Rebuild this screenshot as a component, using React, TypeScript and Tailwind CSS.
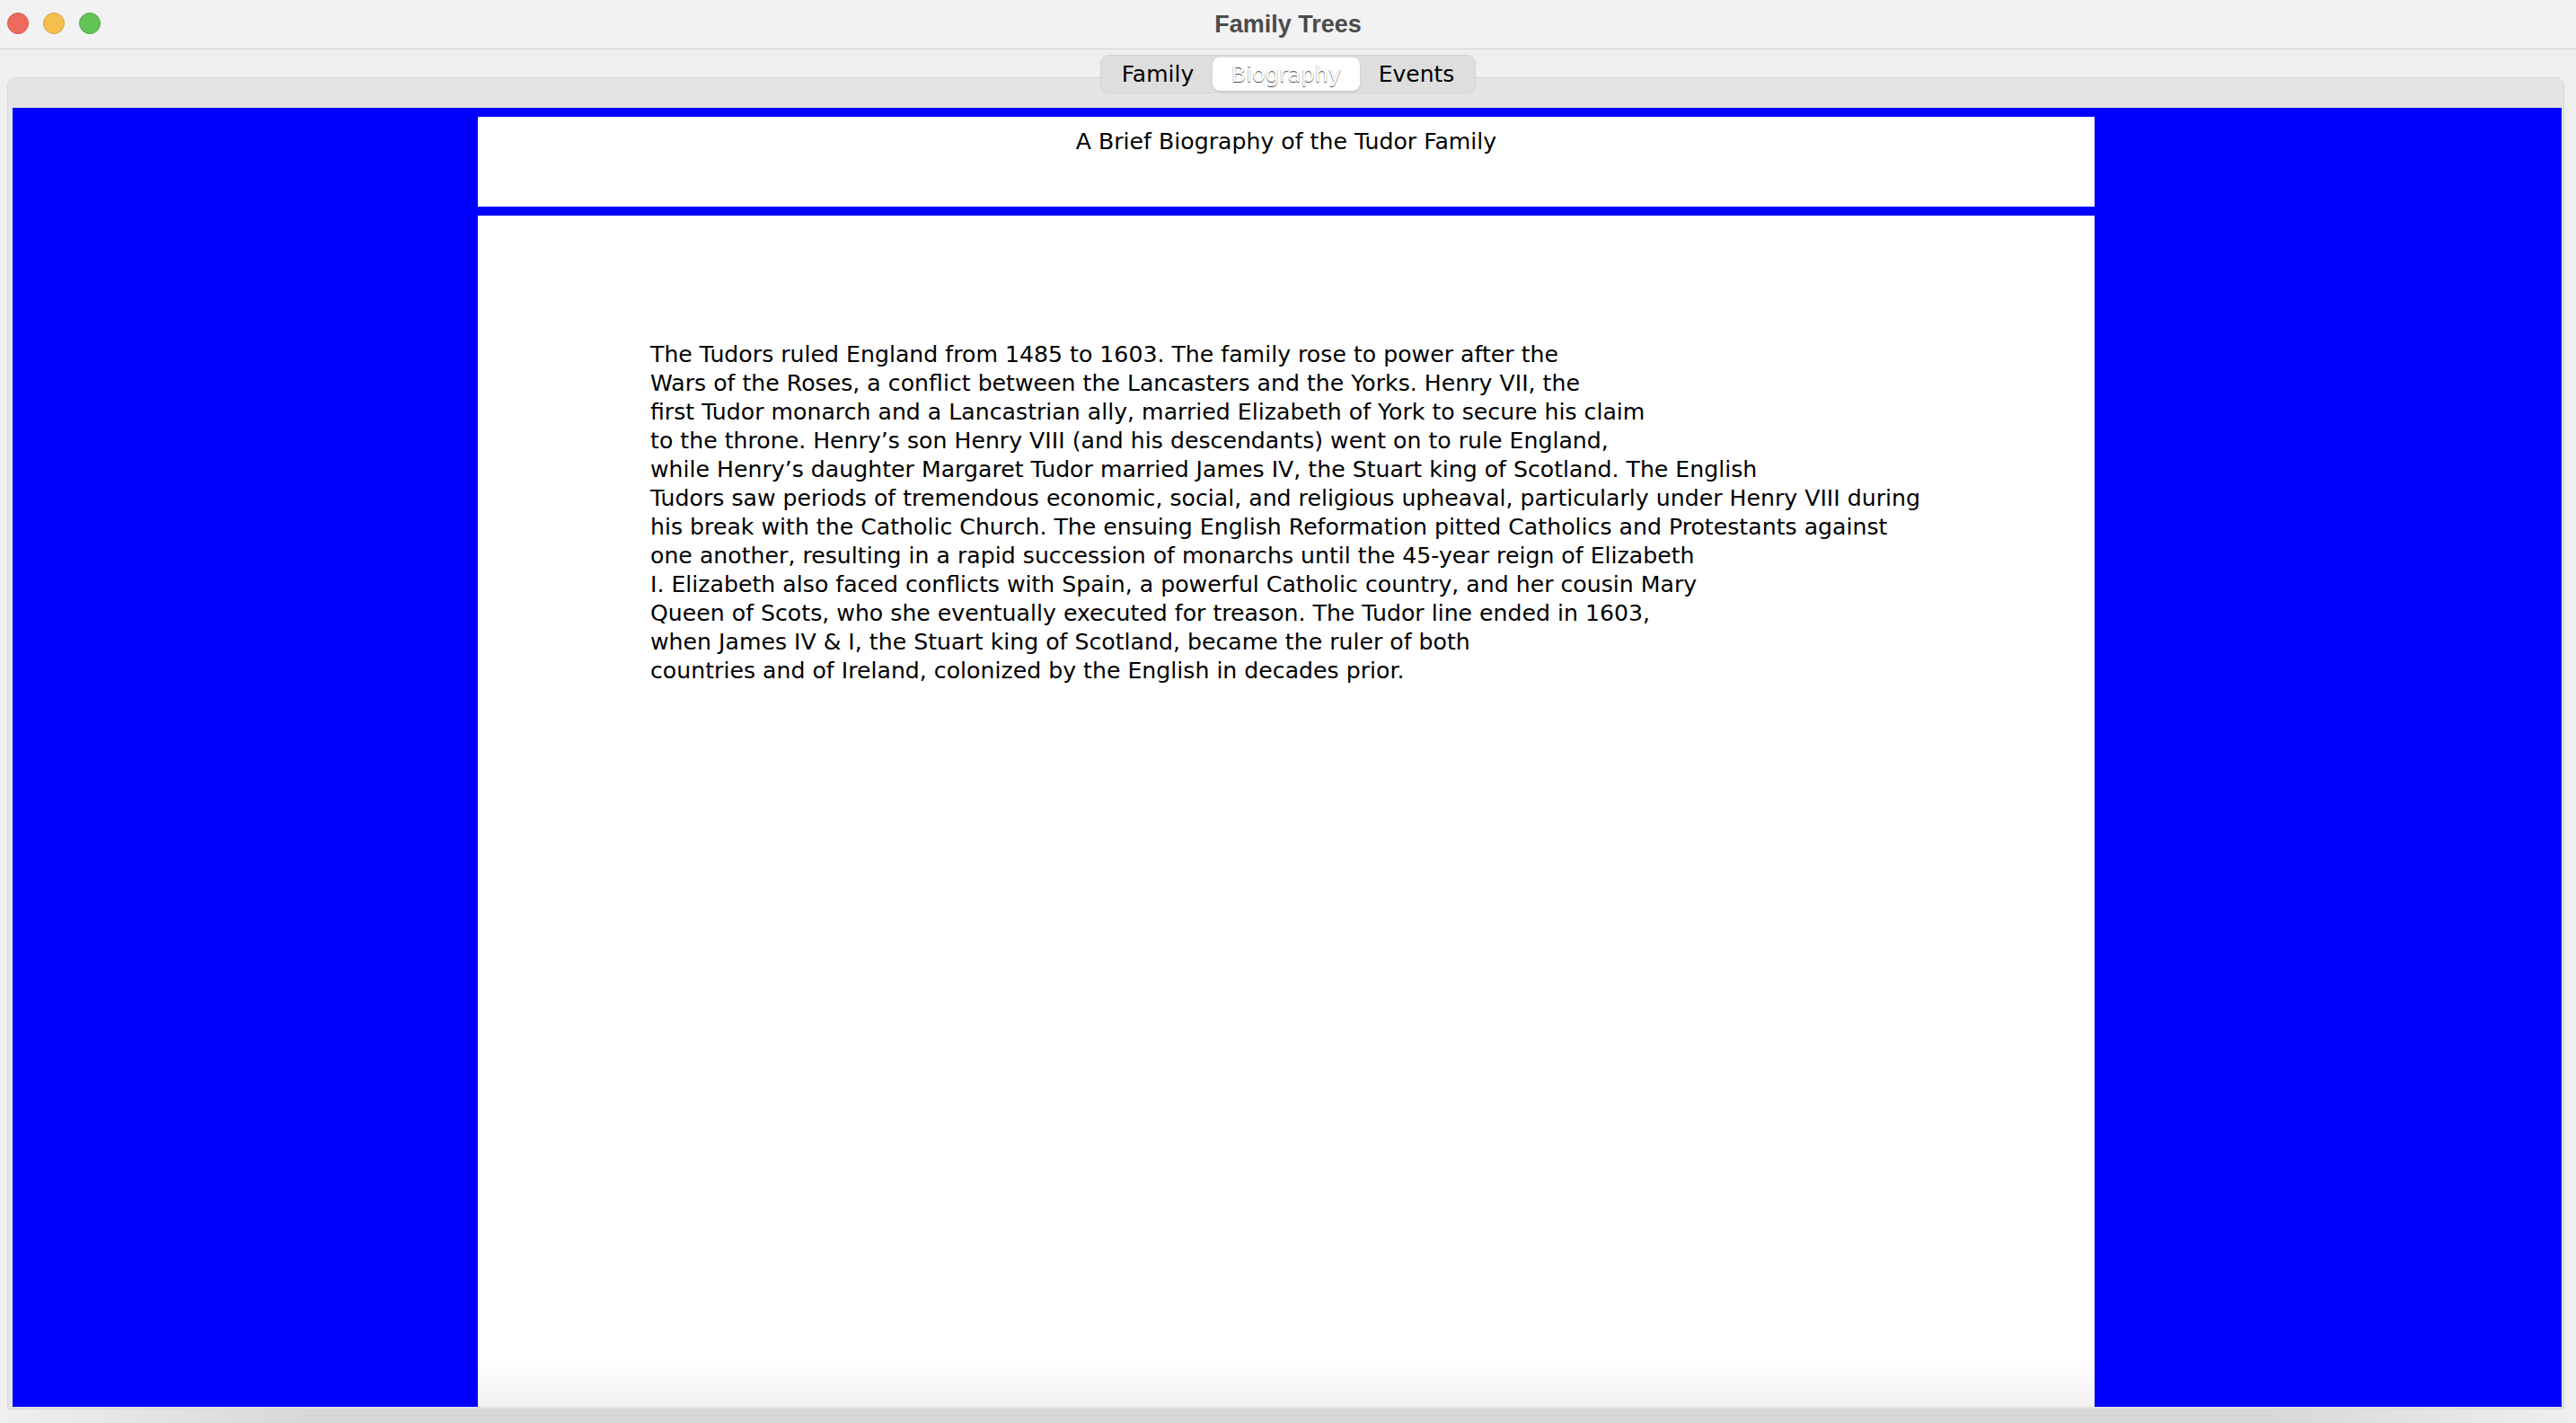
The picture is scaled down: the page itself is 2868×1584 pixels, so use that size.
import React from 'react'

const lines = [
  'The Tudors ruled England from 1485 to 1603. The family rose to power after the',
  'Wars of the Roses, a conflict between the Lancasters and the Yorks. Henry VII, the',
  'first Tudor monarch and a Lancastrian ally, married Elizabeth of York to secure his claim',
  'to the throne. Henry\u2019s son Henry VIII (and his descendants) went on to rule England,',
  'while Henry\u2019s daughter Margaret Tudor married James IV, the Stuart king of Scotland. The English',
  'Tudors saw periods of tremendous economic, social, and religious upheaval, particularly under Henry VIII during',
  'his break with the Catholic Church. The ensuing English Reformation pitted Catholics and Protestants against',
  'one another, resulting in a rapid succession of monarchs until the 45-year reign of Elizabeth',
  'I. Elizabeth also faced conflicts with Spain, a powerful Catholic country, and her cousin Mary',
  'Queen of Scots, who she eventually executed for treason. The Tudor line ended in 1603,',
  'when James IV & I, the Stuart king of Scotland, became the ruler of both',
  'countries and of Ireland, colonized by the English in decades prior.',
]

const tabs = ['Family', 'Biography', 'Events']

export default function App() {
  const selected = 'Biography'

  return (
    <div className="w-[2868px] h-[1584px] flex flex-col overflow-hidden bg-[#efefef] font-['DejaVu_Sans',sans-serif]">
      {/* title bar */}
      <div className="relative h-[55px] shrink-0 flex items-center justify-center bg-[#f2f2f2] border-b border-[#d2d2d2]">
        <div className="absolute left-[8px] top-[14px] flex gap-[16px]">
          <span className="w-[24px] h-[24px] rounded-full bg-[#ee6a5e] border border-[#d5574b]" />
          <span className="w-[24px] h-[24px] rounded-full bg-[#f5bf4f] border border-[#d9a13c]" />
          <span className="w-[24px] h-[24px] rounded-full bg-[#61c454] border border-[#4ea93f]" />
        </div>
        <span className="font-['Liberation_Sans',sans-serif] font-bold text-[27px] text-[#4b4b4b] leading-none">
          Family Trees
        </span>
      </div>

      {/* tabbed pane */}
      <div className="flex-1 flex flex-col min-h-0">
        <div className="relative z-10 mt-[6px] flex justify-center">
          <div className="flex items-center h-[43px] p-[2px] rounded-[10px] bg-[#dedede] border border-[#d3d3d3]">
            {tabs.map((t) =>
              t === selected ? (
                <div
                  key={t}
                  className="w-[164px] h-full flex items-center justify-center rounded-[8px] bg-white shadow-[0_1px_2px_rgba(0,0,0,0.15)] text-[24px] text-white [text-shadow:0_1px_1px_rgba(0,0,0,0.75)]"
                >
                  {t}
                </div>
              ) : (
                <div
                  key={t}
                  className={`${t === 'Family' ? 'w-[122px]' : 'w-[126px]'} h-full flex items-center justify-center text-[25px] text-black`}
                >
                  {t}
                </div>
              )
            )}
          </div>
        </div>

        <div className="-mt-[18px] ml-[8px] mr-[13px] flex-1 min-h-0 flex flex-col rounded-t-[10px] border border-[#d6d6d6] bg-[#e4e4e4] pt-[33px] pl-[5px] pr-[2px] pb-[2px]">
          <div className="flex-1 min-h-0 flex flex-col bg-[#0000ff] pl-[518px] pt-[10px] gap-[10px] pr-[520px]">
            <div className="h-[100px] shrink-0 bg-white text-center text-[25.2px] leading-[32px] text-black pt-[12px]">
              A Brief Biography of the Tudor Family
            </div>
            <div className="flex-1 min-h-0 flex flex-col bg-white">
              <div className="flex-1 pl-[192px] pt-[139px] text-[25.2px] leading-[32px] text-black">
                {lines.map((l, i) => (
                  <div key={i} className="whitespace-pre">
                    {l}
                  </div>
                ))}
              </div>
              <div className="h-[50px] shrink-0 bg-gradient-to-b from-white to-[#f1f1f1]" />
            </div>
          </div>
        </div>

        <div className="h-[15px] shrink-0 bg-[linear-gradient(to_right,#efefef_0%,#d8d8d8_12%,#d8d8d8_88%,#efefef_100%)]" />
      </div>
    </div>
  )
}
